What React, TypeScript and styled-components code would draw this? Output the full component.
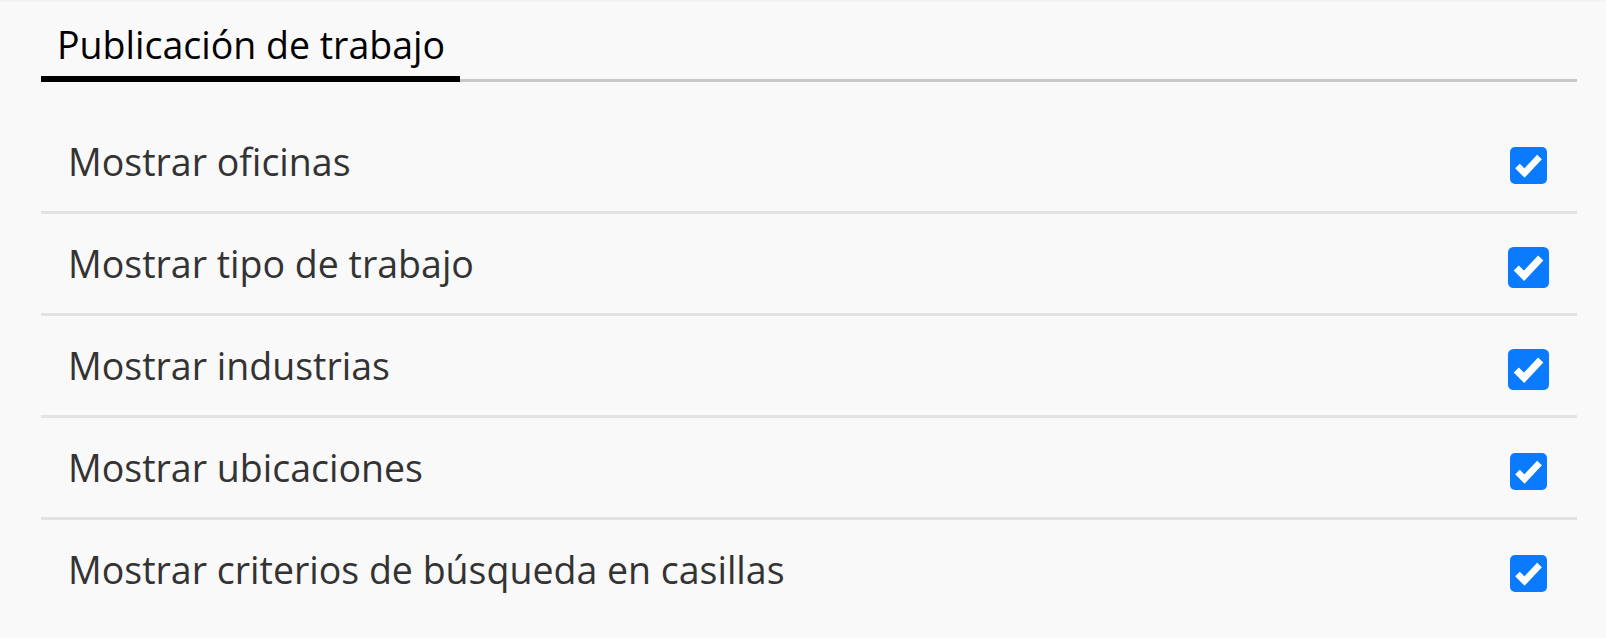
import styled, { createGlobalStyle } from "styled-components";

const GlobalStyle = createGlobalStyle`
  html, body {
    margin: 0;
    padding: 0;
    background: #f9f9f9;
  }
  body {
    font-family: "Open Sans", "Noto Sans", sans-serif;
  }
`;

type Option = {
  label: string;
  big?: boolean;
};

const options: Option[] = [
  { label: "Mostrar oficinas" },
  { label: "Mostrar tipo de trabajo", big: true },
  { label: "Mostrar industrias", big: true },
  { label: "Mostrar ubicaciones" },
  { label: "Mostrar criterios de búsqueda en casillas" },
];

const App = () => {
  return (
    <>
      <GlobalStyle />
      <Page>
        <Tabs>
          <Tab>Publicación de trabajo</Tab>
        </Tabs>
        <List>
          {options.map((opt) => (
            <Row key={opt.label}>
              <Label>{opt.label}</Label>
              <Box $big={opt.big}>
                <svg width="37" height="37" viewBox="0 0 37 37">
                  <path
                    d="M7.5 19 L14.5 26 L29.5 10"
                    fill="none"
                    stroke="#fff"
                    strokeWidth="6.5"
                  />
                </svg>
              </Box>
            </Row>
          ))}
        </List>
      </Page>
    </>
  );
};

export default App;

const Page = styled.div`
  min-height: 638px;
  box-sizing: border-box;
  padding: 19px 29px 0 41px;
  box-shadow: inset 0 3px 3px -2px rgba(0, 0, 0, 0.05);
`;

const Tabs = styled.div`
  display: flex;
  border-bottom: 3px solid #c8c8c8;
`;

const Tab = styled.div`
  font-size: 37.5px;
  line-height: 51px;
  color: #000;
  padding: 0 15px 6px 16px;
  margin-bottom: -3px;
  border-bottom: 6px solid #000;
`;

const List = styled.div`
  margin-top: 30px;
  display: flex;
  flex-direction: column;
`;

const Row = styled.div`
  display: flex;
  align-items: center;
  justify-content: space-between;
  height: 99px;
  padding: 0 30px 0 27px;
  border-bottom: 3px solid #e3e3e3;

  &:last-child {
    border-bottom: none;
  }
`;

const Label = styled.span`
  font-size: 37.5px;
  color: #333;
`;

const Box = styled.span<{ $big?: boolean }>`
  display: flex;
  width: 37px;
  height: 37px;
  margin-top: 8px;
  border-radius: 5px;
  background: #0a7bff;
  transform: ${(p) => (p.$big ? "scale(1.11)" : "none")};
`;
